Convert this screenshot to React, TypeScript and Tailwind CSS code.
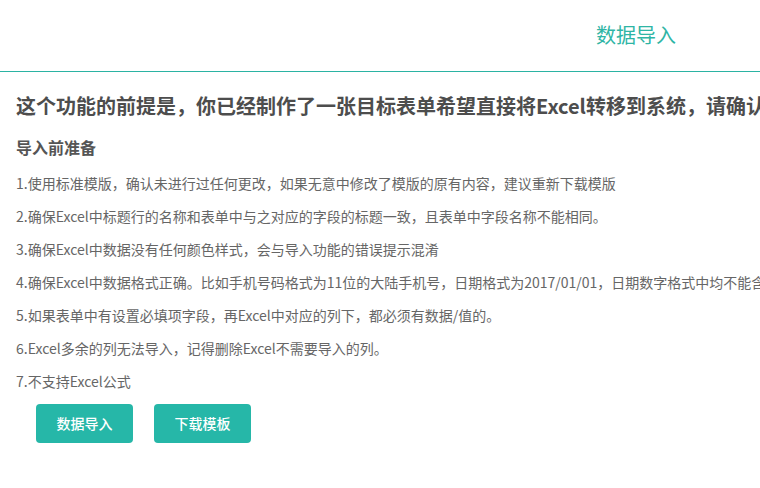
import React from 'react';

const tips: string[] = [
  '1.使用标准模版，确认未进行过任何更改，如果无意中修改了模版的原有内容，建议重新下载模版',
  '2.确保Excel中标题行的名称和表单中与之对应的字段的标题一致，且表单中字段名称不能相同。',
  '3.确保Excel中数据没有任何颜色样式，会与导入功能的错误提示混淆',
  '4.确保Excel中数据格式正确。比如手机号码格式为11位的大陆手机号，日期格式为2017/01/01，日期数字格式中均不能含有空格',
  '5.如果表单中有设置必填项字段，再Excel中对应的列下，都必须有数据/值的。',
  '6.Excel多余的列无法导入，记得删除Excel不需要导入的列。',
  '7.不支持Excel公式',
];

const App: React.FC = () => {
  return (
    <div className="w-[760px] h-[488px] overflow-hidden bg-white font-['Noto_Sans_CJK_SC',sans-serif]">
      <div className="h-[72px] border-b border-[#2bb3a3] flex items-center justify-end pr-[84px] pb-[2px]">
        <span className="text-[20px] leading-[28px] text-[#2fb5a5]">数据导入</span>
      </div>

      <div className="pl-4 whitespace-nowrap">
        <h1 className="mt-[20px] text-[20px] leading-[28px] font-bold text-[#4d4d4d]">
          这个功能的前提是，你已经制作了一张目标表单希望直接将Excel转移到系统，请确认表格格式
        </h1>
        <h2 className="mt-[15px] text-[16px] leading-[24px] font-bold text-[#555]">导入前准备</h2>
        <ul className="mt-[8px] text-[14px] leading-[33px] text-[#666]">
          {tips.map((t) => (
            <li key={t}>{t}</li>
          ))}
        </ul>
      </div>

      <div className="flex gap-[21px] pl-[36px] mt-[6px]">
        <button className="w-[97px] h-[39px] rounded-[4px] bg-[#26b7a8] text-white text-[14px] font-medium">
          数据导入
        </button>
        <button className="w-[97px] h-[39px] rounded-[4px] bg-[#26b7a8] text-white text-[14px] font-medium">
          下载模板
        </button>
      </div>
    </div>
  );
};

export default App;
